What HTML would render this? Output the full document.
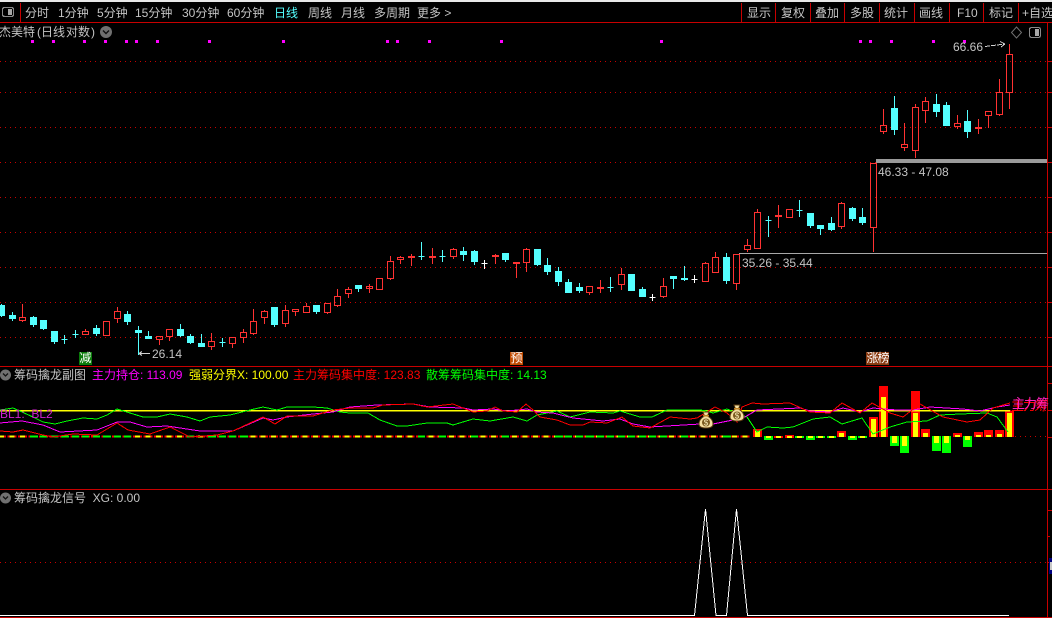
<!DOCTYPE html>
<html>
<head>
<meta charset="utf-8">
<style>
html,body{margin:0;padding:0;background:#000;}
#p{position:relative;width:1052px;height:618px;overflow:hidden;background:#000;font:12px "Liberation Sans","WenQuanYi Zen Hei","Noto Sans CJK SC",sans-serif;color:#c4c4c4;}
#p svg{position:absolute;left:0;top:0;}
.t{position:absolute;white-space:nowrap;line-height:14px;height:14px;}
.m{position:absolute;height:13px;line-height:13px;color:#fff;text-align:center;font-size:12px;}
</style>
</head>
<body>
<div id="p">
<svg width="1052" height="618" viewBox="0 0 1052 618" shape-rendering="crispEdges" fill="none">
<rect x="0" y="0" width="1052" height="2" fill="#e8e8e8"/>
<!-- frame lines -->
<g stroke="#c80000" stroke-width="1">
<path d="M20.5 3V22M741.5 3V22M775.5 3V22M810.5 3V22M844.5 3V22M879.5 3V22M914.5 3V22M949.5 3V22M983.5 3V22M1018.5 3V22"/>
<path d="M0 22.5H1052M0 366.5H1052M0 489.5H1052M0 617.5H1052M1047.5 22V618"/>
<path d="M1048 61.5h4M1048 92.5h4M1048 127.5h4M1048 162.5h4M1048 197.5h4M1048 232.5h4M1048 267.5h4M1048 302.5h4M1048 337.5h4M1048 383.5h4M1048 410.5h4M1048 437.5h4M1048 510.5h4M1048 536.5h2M1048 562.5h4"/>
</g>
<!-- dotted grid -->
<g stroke="#c80000" stroke-width="1" stroke-dasharray="1 4">
<path d="M0 61.5H1047M0 92.5H1047M0 127.5H1047M0 162.5H1047M0 197.5H1047M0 232.5H1047M0 267.5H1047M0 302.5H1047M0 337.5H1047M1010 436.5H1047M1010 410.5H1047M0 562.5H1047"/>
</g>
<rect x="1049" y="558" width="3" height="16" fill="#000080"/>
<rect x="1050" y="562" width="2" height="8" fill="#c8c8c8"/>
<!-- top-left icon -->
<rect x="2.5" y="7.5" width="11" height="9" rx="2" stroke="#8a8a8a" stroke-width="1.4"/>
<rect x="8" y="9" width="4" height="6" fill="#a8a8a8"/>
<!-- right top icons -->
<path d="M1016.5 27L1021.5 32.5L1016.5 38L1011.5 32.5Z" stroke="#707070" shape-rendering="auto"/>
<rect x="1029.5" y="27.5" width="11" height="10" rx="2" stroke="#8a8a8a" stroke-width="1.2"/>
<rect x="1035" y="29" width="4" height="7" fill="#a8a8a8"/>
<!-- magenta marks -->
<path fill="#ff00ff" d="M31 40h3v3h-3zM52 40h3v3h-3zM83 40h3v3h-3zM104 40h3v3h-3zM125 40h3v3h-3zM135 40h3v3h-3zM156 40h3v3h-3zM208 40h3v3h-3zM282 40h3v3h-3zM386 40h3v3h-3zM396 40h3v3h-3zM428 40h3v3h-3zM500 40h3v3h-3zM660 40h3v3h-3zM859 40h3v3h-3zM869 40h3v3h-3zM890 40h3v3h-3zM932 40h3v3h-3zM963 40h3v3h-3z"/>
<!-- gray price lines -->
<rect x="876" y="159" width="171" height="4" fill="#9a9a9a"/>
<rect x="739" y="253" width="308" height="1" fill="#a8a8a8"/>
<!-- red candles -->
<path stroke="#ff3232" stroke-width="1" d="
M22.5 304V317.5M22.5 320.5V322M19.5 317.5h6v3h-6z
M85.5 329V331.5M85.5 334.5V335M82.5 331.5h6v3h-6z
M106.5 335.5V336M103.5 321.5h6v14h-6z
M117.5 307V311.5M117.5 318.5V323M114.5 311.5h6v7h-6z
M159.5 339.5V345M156.5 336.5h6v3h-6z
M169.5 336.5V341M166.5 329.5h6v7h-6z
M211.5 333V341.5M211.5 346.5V350M208.5 341.5h6v5h-6z
M232.5 343.5V348M229.5 337.5h6v6h-6z
M243.5 329V332.5M243.5 337.5V343M240.5 332.5h6v5h-6z
M253.5 309V321.5M253.5 333.5V335M250.5 321.5h6v12h-6z
M264.5 310V311.5M264.5 317.5V324M261.5 311.5h6v6h-6z
M285.5 305V310.5M285.5 323.5V327M282.5 310.5h6v13h-6z
M295.5 311.5V316M292.5 309.5h6v2h-6z
M306.5 303V306.5M303.5 306.5h6v6h-6z
M327.5 312.5V314M324.5 303.5h6v9h-6z
M337.5 289V296.5M337.5 305.5V307M334.5 296.5h6v9h-6z
M348.5 287V289.5M348.5 293.5V298M345.5 289.5h6v4h-6z
M369.5 284V293M366.5 286.5h6v2h-6z
M379.5 278V278.5M376.5 278.5h6v11h-6z
M390.5 256V261.5M390.5 278.5V280M387.5 261.5h6v17h-6z
M400.5 256V257.5M400.5 259.5V264M397.5 257.5h6v2h-6z
M411.5 254V266M408.5 256.5h6v1h-6z
M432.5 248V264M429.5 256.5h6v1h-6z
M453.5 248V249.5M453.5 256.5V259M450.5 249.5h6v7h-6z
M495.5 254V264M492.5 255.5h6v1h-6z
M516.5 263V278M513.5 262.5h6v1h-6z
M526.5 248V249.5M526.5 262.5V272M523.5 249.5h6v13h-6z
M589.5 292.5V295M586.5 286.5h6v6h-6z
M600.5 280V293M597.5 287.5h6v1h-6z
M621.5 268V274.5M621.5 284.5V290M618.5 274.5h6v10h-6z
M663.5 278V286.5M663.5 296.5V298M660.5 286.5h6v10h-6z
M705.5 262V263.5M702.5 263.5h6v18h-6z
M715.5 252V257.5M712.5 257.5h6v15h-6z
M736.5 283.5V290M733.5 254.5h6v29h-6z
M747.5 239V245.5M747.5 249.5V252M744.5 245.5h6v4h-6z
M757.5 209V212.5M754.5 212.5h6v36h-6z
M778.5 205V228M775.5 215.5h6v1h-6z
M786.5 209.5h6v8h-6z
M841.5 202V203.5M841.5 226.5V229M838.5 203.5h6v23h-6z
M873.5 227.5V252M870.5 163.5h6v64h-6z
M883.5 109V125.5M883.5 131.5V134M880.5 125.5h6v6h-6z
M904.5 123V144.5M904.5 147.5V151M901.5 144.5h6v3h-6z
M915.5 104V107.5M915.5 150.5V158M912.5 107.5h6v43h-6z
M925.5 97V101.5M925.5 110.5V123M922.5 101.5h6v9h-6z
M957.5 115V123.5M957.5 126.5V129M954.5 123.5h6v3h-6z
M978.5 119V134M975.5 127.5h6v1h-6z
M988.5 115.5V128M985.5 111.5h6v4h-6z
M999.5 79V92.5M999.5 114.5V116M996.5 92.5h6v22h-6z
M1009.5 44V54.5M1009.5 92.5V109M1006.5 54.5h6v38h-6z"/>
<!-- cyan candles -->
<path stroke="#54ffff" fill="#54ffff" stroke-width="1" d="
M1.5 304V317M0 305.5h4.5v10h-4.5z
M12.5 312V321M9.5 315.5h6v3h-6z
M33.5 316V327M30.5 317.5h6v7h-6z
M43.5 320V330M40.5 320.5h6v8h-6z
M54.5 331V344M51.5 331.5h6v10h-6z
M64.5 335V344M61.5 339.5h6
M75.5 330V338M72.5 334.5h6
M96.5 325V336M93.5 328.5h6v5h-6z
M127.5 311V325M124.5 314.5h6v7h-6z
M138.5 326V355M135.5 330.5h6v2h-6z
M148.5 331V339M145.5 336.5h6v2h-6z
M180.5 324V337M177.5 329.5h6v6h-6z
M190.5 334V344M187.5 336.5h6v6h-6z
M201.5 334V347M198.5 343.5h6v3h-6z
M222.5 338V347M219.5 342.5h6
M274.5 307V327M271.5 307.5h6v17h-6z
M316.5 305V314M313.5 305.5h6v6h-6z
M358.5 285V292M355.5 285.5h6v3h-6z
M421.5 242V260M418.5 256.5h6
M442.5 250V262M439.5 256.5h6
M463.5 247V261M460.5 251.5h6v3h-6z
M474.5 250V265M471.5 251.5h6v10h-6z
M505.5 253V262M502.5 253.5h6v6h-6z
M537.5 249V266M534.5 249.5h6v15h-6z
M547.5 258V275M544.5 265.5h6v6h-6z
M558.5 267V286M555.5 271.5h6v10h-6z
M568.5 279V293M565.5 282.5h6v10h-6z
M579.5 283V293M576.5 287.5h6v3h-6z
M610.5 277V292M607.5 287.5h6
M631.5 274V291M628.5 274.5h6v16h-6z
M642.5 287V297M639.5 289.5h6v7h-6z
M673.5 276V289M670.5 276.5h6v2h-6z
M684.5 266V281M681.5 278.5h6v1h-6z
M726.5 253V284M723.5 257.5h6v23h-6z
M768.5 216V237M765.5 220.5h6
M799.5 200V217M796.5 210.5h6
M810.5 213V228M807.5 213.5h6v12h-6z
M820.5 225V235M817.5 225.5h6v3h-6z
M831.5 217V231M828.5 223.5h6v6h-6z
M852.5 207V221M849.5 208.5h6v10h-6z
M862.5 208V225M859.5 217.5h6v5h-6z
M894.5 96V135M891.5 108.5h6v21h-6z
M936.5 94V117M933.5 104.5h6v7h-6z
M946.5 102V126M943.5 105.5h6v20h-6z
M967.5 110V138M964.5 121.5h6v10h-6z"/>
<!-- white crosses -->
<path stroke="#ffffff" d="M484.5 260V269M481.5 263.5h6M652.5 294V301M649.5 297.5h6M694.5 275V283M691.5 279.5h6"/>
<!-- arrows -->
<path stroke="#d0d0d0" d="M139 353.5H150M139 353.5l3-2M139 353.5l3 2"/>
<path stroke="#d0d0d0" stroke-dasharray="5 1" d="M985 46.5L1005 44"/>
<path stroke="#d0d0d0" d="M1005 44L1000 41.5M1005 44L1001 47"/>

<!-- sub chart bars -->
<path stroke="#ff0000" stroke-width="2" stroke-dasharray="9 1.47" d="M-3 436.5H750"/>
<path stroke="#ffff00" stroke-width="2" stroke-dasharray="5 5.47" d="M-1 436.5H750"/>
<path stroke="#00ff00" stroke-width="2" d="M30 436.5h8M40 436.5h7M51 436.5h7M61 436.5h8M72 436.5h7M82 436.5h7M93 436.5h7M103 436.5h8M114 436.5h7M124 436.5h7M187 436.5h7M208 436.5h8M219 436.5h7M229 436.5h7M240 436.5h8M418 436.5h7M439 436.5h7M471 436.5h7M502 436.5h7M555 436.5h8M565 436.5h7M576 436.5h7M586 436.5h8M597 436.5h7M607 436.5h7M618 436.5h7M628 436.5h7M639 436.5h7M649 436.5h7M660 436.5h7M681 436.5h7M723 436.5h8"/>
<g fill="#ff0000">
<rect x="753" y="429" width="9" height="8"/><rect x="774" y="436" width="9" height="2"/><rect x="785" y="435" width="9" height="3"/>
<rect x="837" y="431" width="9" height="6"/><rect x="869" y="417" width="9" height="20"/><rect x="879" y="386" width="9" height="51"/>
<rect x="911" y="391" width="9" height="46"/><rect x="921" y="429" width="9" height="8"/><rect x="953" y="433" width="9" height="4"/>
<rect x="974" y="432" width="9" height="5"/><rect x="984" y="430" width="9" height="7"/><rect x="995" y="430" width="9" height="7"/><rect x="1005" y="411" width="9" height="26"/>
</g>
<g fill="#00ff00">
<rect x="764" y="436" width="9" height="4"/><rect x="795" y="436" width="9" height="2"/><rect x="806" y="436" width="9" height="4"/><rect x="816" y="436" width="9" height="2"/><rect x="827" y="436" width="9" height="2"/>
<rect x="848" y="436" width="9" height="4"/><rect x="858" y="436" width="9" height="2"/>
<rect x="890" y="436" width="9" height="10"/><rect x="900" y="436" width="9" height="17"/><rect x="932" y="436" width="9" height="15"/><rect x="942" y="436" width="9" height="17"/><rect x="963" y="436" width="9" height="11"/>
</g>
<g fill="#ffff00">
<rect x="755" y="431" width="5" height="6"/><rect x="766" y="436" width="5" height="2"/><rect x="776" y="436" width="5" height="2"/><rect x="787" y="436" width="5" height="2"/><rect x="797" y="436" width="5" height="2"/><rect x="808" y="436" width="5" height="2"/><rect x="818" y="436" width="5" height="2"/><rect x="829" y="436" width="5" height="2"/>
<rect x="839" y="433" width="5" height="4"/><rect x="850" y="436" width="5" height="2"/><rect x="860" y="436" width="5" height="2"/>
<rect x="871" y="419" width="5" height="18"/><rect x="881" y="397" width="5" height="40"/><rect x="892" y="436" width="5" height="7"/><rect x="902" y="436" width="5" height="10"/>
<rect x="913" y="413" width="5" height="24"/><rect x="923" y="433" width="5" height="4"/><rect x="934" y="436" width="5" height="7"/><rect x="944" y="436" width="5" height="7"/>
<rect x="955" y="435" width="5" height="2"/><rect x="965" y="436" width="5" height="4"/><rect x="976" y="435" width="5" height="2"/><rect x="986" y="435" width="5" height="2"/><rect x="997" y="434" width="5" height="3"/><rect x="1007" y="413" width="5" height="24"/>
</g>
<!-- yellow line -->
<rect x="0" y="410" width="1010" height="1.5" fill="#ffff00"/>
<!-- green line -->
<path stroke="#00ff00" d="M0 410L13 408L22 412L33 417L43 422L55 424L67 421L83 418L97 419L107 415L117 409L130 413L143 417L157 417L170 414L187 417L200 421L210 417L230 415L250 410L263 407L277 410L287 407L300 407L313 407L327 408L340 412L350 413L368 413L380 420L397 426L407 426L427 423L447 423L453 425L473 419L490 421L513 417L527 421L537 415L557 411L570 417L590 412L613 413L620 411L640 417L652 417L667 410L700 410L707 411L713 413L727 409L747 417L757 432L767 427L783 428L793 427L813 419L830 417L842 424L862 418L873 434L890 427L907 422L927 421L940 415L960 414L987 413L997 417L1008 432"/>
<!-- magenta line -->
<path stroke="#ff00ff" d="M0 423L22 421L43 425L60 432L97 430L117 422L130 422L147 427L167 426L200 431L233 431L263 418L273 420L287 417L313 414L333 412L350 407L377 405L413 404L430 407L463 408L473 410L493 409L507 411L527 409L537 412L553 413L573 418L603 421L620 419L633 424L650 427L667 426L700 424L707 423L713 424L723 422L743 418L757 410L800 408L810 411L830 412L843 408L860 412L873 408L897 410L913 410L930 407L963 409L980 411L997 407L1010 405"/>
<!-- red line -->
<path stroke="#ff0000" d="M0 431L13 432L23 430L43 435L53 437L73 434L97 435L117 423L128 430L150 434L170 427L190 437L217 435L233 431L263 417L275 424L287 416L313 416L333 410L350 408L373 408L383 405L413 404L427 407L453 404L473 412L487 411L495 407L503 411L517 412L526 404L533 410L540 417L557 420L570 425L583 425L590 422L607 423L622 417L633 426L650 428L670 417L690 419L697 418L715 407L727 413L737 422L742 407L752 403L763 404L790 403L810 412L830 413L842 403L860 413L872 403L890 413L903 417L920 404L943 417L967 422L980 420L993 408L1010 403"/>
<!-- panel 3 line -->
<path stroke="#ffffff" stroke-width="1" d="M0 615.5H694.5L705.5 509L716 615.5H726.5L736.5 509L747.5 615.5H1009"/>
</svg>

<!-- toolbar -->
<span class="t" style="left:25px;top:6px">分时</span>
<span class="t" style="left:58px;top:6px">1分钟</span>
<span class="t" style="left:97px;top:6px">5分钟</span>
<span class="t" style="left:135px;top:6px">15分钟</span>
<span class="t" style="left:182px;top:6px">30分钟</span>
<span class="t" style="left:227px;top:6px">60分钟</span>
<span class="t" style="left:274px;top:6px;color:#54ffff">日线</span>
<span class="t" style="left:308px;top:6px">周线</span>
<span class="t" style="left:341px;top:6px">月线</span>
<span class="t" style="left:374px;top:6px">多周期</span>
<span class="t" style="left:417px;top:6px">更多 &gt;</span>
<span class="t" style="left:747px;top:6px">显示</span>
<span class="t" style="left:781px;top:6px">复权</span>
<span class="t" style="left:815px;top:6px">叠加</span>
<span class="t" style="left:850px;top:6px">多股</span>
<span class="t" style="left:884px;top:6px">统计</span>
<span class="t" style="left:919px;top:6px">画线</span>
<span class="t" style="left:957px;top:6px">F10</span>
<span class="t" style="left:989px;top:6px">标记</span>
<span class="t" style="left:1022px;top:6px">+自选</span>

<!-- title -->
<span class="t" style="left:-1px;top:25px">杰美特</span>
<span class="t" style="left:37px;top:25px">(</span>
<span class="t" style="left:41px;top:25px">日线</span>
<span class="t" style="left:66px;top:25px">对数</span>
<span class="t" style="left:91px;top:25px">)</span>
<svg width="14" height="14" viewBox="0 0 14 14" style="left:100px;top:25px"><circle cx="6" cy="7" r="6" fill="#707070"/><path d="M3 5.5L6 8.5L9 5.5" stroke="#111" stroke-width="1.4" fill="none"/></svg>

<!-- price labels -->
<span class="t" style="left:953px;top:40px">66.66</span>
<span class="t" style="left:878px;top:165px">46.33 - 47.08</span>
<span class="t" style="left:742px;top:256px">35.26 - 35.44</span>
<span class="t" style="left:152px;top:347px">26.14</span>

<!-- markers -->
<span class="m" style="left:79px;top:352px;width:13px;background:#0a7a0a">减</span>
<span class="m" style="left:510px;top:352px;width:13px;background:#c04a00">预</span>
<span class="m" style="left:866px;top:352px;width:23px;background:#8a3a10;letter-spacing:-1px">涨榜</span>

<!-- panel 2 header -->
<svg width="12" height="12" viewBox="0 0 12 12" style="left:0;top:369px"><circle cx="5.5" cy="6" r="5.5" fill="#707070"/><path d="M3 4.5L5.5 7L8 4.5" stroke="#111" stroke-width="1.3" fill="none"/></svg>
<span class="t" style="left:14px;top:368px">筹码擒龙副图</span>
<span class="t" style="left:92px;top:368px;color:#ff00ff">主力持仓: 113.09</span>
<span class="t" style="left:189px;top:368px;color:#ffff00">强弱分界X: 100.00</span>
<span class="t" style="left:293px;top:368px;color:#ff0000">主力筹码集中度: 123.83</span>
<span class="t" style="left:426px;top:368px;color:#00ff00">散筹筹码集中度: 14.13</span>
<span class="t" style="left:0;top:407px;color:#d020d0">BL1:&nbsp; BL2</span>
<span class="t" style="left:1011px;top:399px;color:#ff0000;font-size:13px;letter-spacing:-1px">主力筹</span>
<span class="t" style="left:1012px;top:397px;color:#ff20c0;font-size:13px;letter-spacing:-1px">主力筹</span>

<!-- money bags -->
<svg width="16" height="18" viewBox="0 0 16 18" style="left:698px;top:411px"><path d="M5 1H11L9.5 5C13 7 15 10 15 13C15 16 12 17 8 17C4 17 1 16 1 13C1 10 3 7 6.5 5Z" fill="#f4dfa0" stroke="#5a3a10"/><rect x="5" y="4" width="6" height="1.5" fill="#c08020"/><circle cx="8" cy="11.5" r="4" fill="#7a5a20"/><text x="8" y="14.5" font-size="8" text-anchor="middle" fill="#fff4c0" font-family="Liberation Sans">$</text></svg>
<svg width="16" height="18" viewBox="0 0 16 18" style="left:729px;top:404px"><path d="M5 1H11L9.5 5C13 7 15 10 15 13C15 16 12 17 8 17C4 17 1 16 1 13C1 10 3 7 6.5 5Z" fill="#f4dfa0" stroke="#5a3a10"/><rect x="5" y="4" width="6" height="1.5" fill="#c08020"/><circle cx="8" cy="11.5" r="4" fill="#7a5a20"/><text x="8" y="14.5" font-size="8" text-anchor="middle" fill="#fff4c0" font-family="Liberation Sans">$</text></svg>

<!-- panel 3 header -->
<svg width="12" height="12" viewBox="0 0 12 12" style="left:0;top:492px"><circle cx="5.5" cy="6" r="5.5" fill="#707070"/><path d="M3 4.5L5.5 7L8 4.5" stroke="#111" stroke-width="1.3" fill="none"/></svg>
<span class="t" style="left:14px;top:491px">筹码擒龙信号&nbsp; XG: 0.00</span>
</div>
</body>
</html>
